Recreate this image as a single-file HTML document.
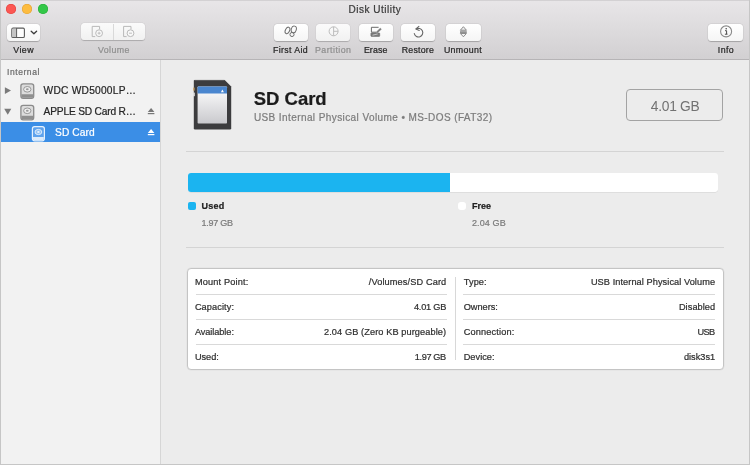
<!DOCTYPE html>
<html><head><meta charset="utf-8"><title>Disk Utility</title>
<style>
html,body{margin:0;padding:0;}
body{width:750px;height:465px;overflow:hidden;position:relative;background:#ececec;font-family:"Liberation Sans",sans-serif;}
.t{position:absolute;white-space:nowrap;line-height:1;-webkit-text-stroke:0.22px currentColor;}
.abs{position:absolute;}
#toolbar{position:absolute;left:0;top:0;width:750px;height:59px;background:linear-gradient(#e8e6e8,#d2d0d2);border-bottom:1px solid #b6b4b6;box-shadow:inset 0 1px 0 #d3d1d3;box-sizing:content-box;}
#sidebar{position:absolute;left:0;top:60px;width:160px;height:405px;background:#f2f2f2;border-right:1px solid #d6d6d6;}
.btn{position:absolute;top:23.8px;height:17.2px;border-radius:3.5px;background:linear-gradient(#ffffff,#f5f5f5);box-shadow:0 0.5px 0.9px rgba(0,0,0,0.22),0 0 0 0.5px rgba(0,0,0,0.06);}
.hl{position:absolute;height:1px;background:#d4d4d4;}
#app{position:absolute;left:0;top:0;width:750px;height:465px;overflow:hidden;will-change:transform;}
#frame{position:absolute;left:0;top:0;width:748px;height:463px;border:1px solid #c6c6c6;border-top:none;height:464px;pointer-events:none;}
svg{position:absolute;overflow:visible;}
</style></head><body><div id="app">
<div id="toolbar"></div>
<div id="sidebar"></div>

<div class="abs" style="left:5.7px;top:4px;width:10px;height:10px;border-radius:50%;background:#fc5753;box-shadow:inset 0 0 0 0.5px #df3e3a;"></div>
<div class="abs" style="left:21.7px;top:4px;width:10px;height:10px;border-radius:50%;background:#fdbc40;box-shadow:inset 0 0 0 0.5px #de9f34;"></div>
<div class="abs" style="left:37.9px;top:4px;width:10px;height:10px;border-radius:50%;background:#33c748;box-shadow:inset 0 0 0 0.5px #27aa35;"></div>
<div class="btn" style="left:7px;width:33px;"></div>
<div class="btn" style="left:80.5px;top:23px;width:64.7px;opacity:0.88;"></div>
<div class="abs" style="left:112.7px;top:23.5px;width:1px;height:16.5px;background:#d9d9d9;"></div>
<div class="btn" style="left:273.6px;width:34px;opacity:1;"></div>
<div class="btn" style="left:316.3px;width:34px;opacity:0.88;"></div>
<div class="btn" style="left:358.8px;width:34px;opacity:1;"></div>
<div class="btn" style="left:401.2px;width:34px;opacity:1;"></div>
<div class="btn" style="left:446px;width:35px;opacity:1;"></div>
<div class="btn" style="left:708.4px;width:35px;opacity:1;"></div>
<span class="t" style="left:348.60px;top:5.00px;font-size:10px;color:#3a3a3a;letter-spacing:0.503px;">Disk Utility</span>
<span class="t" style="left:13.30px;top:46.00px;font-size:8.8px;color:#262626;letter-spacing:0.454px;">View</span>
<span class="t" style="left:98.00px;top:46.00px;font-size:8.8px;color:#8f8f8f;letter-spacing:0.390px;">Volume</span>
<span class="t" style="left:273.00px;top:46.00px;font-size:8.8px;color:#262626;letter-spacing:0.364px;">First Aid</span>
<span class="t" style="left:315.00px;top:46.00px;font-size:8.8px;color:#8f8f8f;letter-spacing:0.465px;">Partition</span>
<span class="t" style="left:363.90px;top:46.00px;font-size:8.8px;color:#262626;letter-spacing:0.104px;">Erase</span>
<span class="t" style="left:401.80px;top:46.00px;font-size:8.8px;color:#262626;letter-spacing:0.199px;">Restore</span>
<span class="t" style="left:443.90px;top:46.00px;font-size:8.8px;color:#262626;letter-spacing:0.365px;">Unmount</span>
<span class="t" style="left:717.80px;top:46.00px;font-size:8.8px;color:#262626;letter-spacing:0.407px;">Info</span>
<div class="abs" style="left:1px;top:122.4px;width:159px;height:19.5px;background:#3b8ee6;"></div>
<span class="t" style="left:7.00px;top:68.00px;font-size:8.5px;color:#6c6c6c;letter-spacing:0.565px;">Internal</span>
<span class="t" style="left:43.60px;top:86.00px;font-size:10.2px;color:#262626;letter-spacing:0.237px;">WDC WD5000LP…</span>
<span class="t" style="left:43.60px;top:107.00px;font-size:10.2px;color:#262626;letter-spacing:-0.188px;">APPLE SD Card R…</span>
<span class="t" style="left:55.00px;top:128.00px;font-size:10.2px;color:#ffffff;letter-spacing:0.114px;">SD Card</span>
<span class="t" style="left:253.80px;top:90.00px;font-size:18.5px;color:#1c1c1c;letter-spacing:-0.030px;font-weight:bold;">SD Card</span>
<span class="t" style="left:253.90px;top:113.00px;font-size:10px;color:#7c7c7c;letter-spacing:0.410px;">USB Internal Physical Volume • MS-DOS (FAT32)</span>
<div class="abs" style="left:626.3px;top:89px;width:95px;height:30px;border:1.3px solid #a3a3a3;border-radius:4px;"></div>
<span class="t" style="left:650.80px;top:100.00px;font-size:13.8px;color:#727272;letter-spacing:-0.272px;-webkit-text-stroke:0;">4.01 GB</span>
<div class="hl" style="left:186px;top:151px;width:538px;"></div>
<div class="hl" style="left:186px;top:247px;width:538px;"></div>
<div class="abs" style="left:188px;top:173px;width:530px;height:19px;border-radius:3px;background:#ffffff;overflow:hidden;box-shadow:0 0.5px 0.5px rgba(0,0,0,0.12);"><div style="width:261.6px;height:19px;background:#1bb4f0;"></div></div>
<div class="abs" style="left:188.4px;top:201.8px;width:7.8px;height:7.8px;border-radius:2px;background:#1bb4f0;"></div>
<div class="abs" style="left:458.4px;top:201.6px;width:8px;height:8px;border-radius:3px;background:#ffffff;"></div>
<span class="t" style="left:201.50px;top:202.00px;font-size:9px;color:#222;letter-spacing:0.232px;font-weight:bold;">Used</span>
<span class="t" style="left:201.50px;top:219.00px;font-size:9px;color:#7a7a7a;letter-spacing:-0.254px;">1.97 GB</span>
<span class="t" style="left:472.00px;top:202.00px;font-size:9px;color:#222;letter-spacing:0.031px;font-weight:bold;">Free</span>
<span class="t" style="left:472.00px;top:219.00px;font-size:9px;color:#7a7a7a;letter-spacing:0.113px;">2.04 GB</span>
<div class="abs" style="left:187px;top:268px;width:535px;height:99.5px;border:1px solid #c4c4c4;border-radius:4px;background:#ffffff;box-shadow:0 0 0 0.5px rgba(0,0,0,0.05);"></div>
<div class="abs" style="left:455px;top:277px;width:1px;height:83px;background:#d8d8d8;"></div>
<div class="hl" style="left:195.5px;top:294px;width:251px;background:#d9d9d9;"></div>
<div class="hl" style="left:463px;top:294px;width:252px;background:#d9d9d9;"></div>
<div class="hl" style="left:195.5px;top:319px;width:251px;background:#d9d9d9;"></div>
<div class="hl" style="left:463px;top:319px;width:252px;background:#d9d9d9;"></div>
<div class="hl" style="left:195.5px;top:344px;width:251px;background:#d9d9d9;"></div>
<div class="hl" style="left:463px;top:344px;width:252px;background:#d9d9d9;"></div>
<span class="t" style="left:194.90px;top:278.00px;font-size:9.2px;color:#303030;letter-spacing:0.168px;">Mount Point:</span>
<span class="t" style="left:368.80px;top:278.00px;font-size:9.2px;color:#303030;letter-spacing:0.121px;">/Volumes/SD Card</span>
<span class="t" style="left:194.90px;top:303.00px;font-size:9.2px;color:#303030;letter-spacing:0.094px;">Capacity:</span>
<span class="t" style="left:414.00px;top:303.00px;font-size:9.2px;color:#303030;letter-spacing:-0.242px;">4.01 GB</span>
<span class="t" style="left:194.90px;top:328.00px;font-size:9.2px;color:#303030;letter-spacing:-0.070px;">Available:</span>
<span class="t" style="left:324.00px;top:328.00px;font-size:9.2px;color:#303030;letter-spacing:0.101px;">2.04 GB (Zero KB purgeable)</span>
<span class="t" style="left:194.90px;top:353.00px;font-size:9.2px;color:#303030;letter-spacing:-0.033px;">Used:</span>
<span class="t" style="left:414.80px;top:353.00px;font-size:9.2px;color:#303030;letter-spacing:-0.376px;">1.97 GB</span>
<span class="t" style="left:463.70px;top:278.00px;font-size:9.2px;color:#303030;letter-spacing:0.124px;">Type:</span>
<span class="t" style="left:590.90px;top:278.00px;font-size:9.2px;color:#303030;letter-spacing:0.077px;">USB Internal Physical Volume</span>
<span class="t" style="left:463.70px;top:303.00px;font-size:9.2px;color:#303030;letter-spacing:-0.009px;">Owners:</span>
<span class="t" style="left:678.90px;top:303.00px;font-size:9.2px;color:#303030;letter-spacing:0.072px;">Disabled</span>
<span class="t" style="left:463.70px;top:328.00px;font-size:9.2px;color:#303030;letter-spacing:0.160px;">Connection:</span>
<span class="t" style="left:697.50px;top:328.00px;font-size:9.2px;color:#303030;letter-spacing:-0.608px;">USB</span>
<span class="t" style="left:463.70px;top:353.00px;font-size:9.2px;color:#303030;letter-spacing:0.038px;">Device:</span>
<span class="t" style="left:683.90px;top:353.00px;font-size:9.2px;color:#303030;letter-spacing:0.017px;">disk3s1</span>
<!-- view icon -->
<svg style="left:0;top:0" width="750" height="60" viewBox="0 0 750 60" fill="none">
  <!-- sidebar toggle -->
  <rect x="11.8" y="28.1" width="12.6" height="9.4" rx="1.3" stroke="#5a5a5a" stroke-width="1.1" fill="#fdfdfd"/>
  <rect x="12.3" y="28.6" width="4" height="8.4" fill="#c4c4c4"/>
  <line x1="16.6" y1="28.1" x2="16.6" y2="37.5" stroke="#5a5a5a" stroke-width="1"/>
  <polyline points="31.2,31.2 33.9,33.8 36.6,31.2" stroke="#3c3c3c" stroke-width="1.3" stroke-linecap="round" stroke-linejoin="round"/>
  <!-- volume add -->
  <g stroke="#b9b9b9" stroke-width="1" fill="none">
    <path d="M95.2 36.6 H92.2 V26.4 H99.6 V29.3"/>
    <circle cx="99.1" cy="33.2" r="3.4" fill="#f9f9f9"/>
    <path d="M97.6 33.2 H100.6 M99.1 31.7 V34.7" stroke-width="0.9"/>
    <path d="M126.6 36.6 H123.6 V26.4 H131 V29.3"/>
    <circle cx="130.5" cy="33.2" r="3.4" fill="#f9f9f9"/>
    <path d="M129 33.2 H132" stroke-width="0.9"/>
  </g>
  <!-- first aid (stethoscope) -->
  <g stroke="#707070" stroke-width="1" fill="none">
    <ellipse cx="287.5" cy="30.4" rx="2.1" ry="3.4" transform="rotate(26 287.5 30.4)"/>
    <ellipse cx="293.8" cy="29.4" rx="2.5" ry="3.4" transform="rotate(16 293.8 29.4)"/>
    <circle cx="292" cy="34.5" r="2.05"/>
  </g>
  <!-- partition -->
  <g stroke="#bdbdbd" stroke-width="1" fill="none">
    <circle cx="333.6" cy="31.3" r="4.5"/>
    <path d="M333.6 26.8 V35.8 M333.6 31.3 H338.1"/>
  </g>
  <!-- erase -->
  <g stroke="#6a6a6a" stroke-width="1" fill="none" stroke-linejoin="round">
    <path d="M378.6 27.3 H371.4 V32.2 H376"/>
    <rect x="370.9" y="33" width="8.8" height="3.4" rx="0.6" fill="#7c7c7c" stroke="#6a6a6a" stroke-width="0.6"/>
    <path d="M372.6 35.2 L377.8 33.9" stroke="#d8d8d8" stroke-width="0.8"/>
    <path d="M376.2 32.2 L380.3 28.2 L381.3 29.3 L377.4 32.8 Z" fill="#777" stroke-width="0.5"/>
  </g>
  <!-- restore -->
  <g stroke="#666" stroke-width="1.1" fill="none" stroke-linecap="round" stroke-linejoin="round">
    <path d="M416.2 29.0 A4.3 4.3 0 1 1 414.3 33.6"/>
    <path d="M418.9 26.4 L415.9 29.0 L419.3 30.4"/>
  </g>
  <!-- unmount -->
  <g stroke="#7a7a7a" stroke-width="0.85" fill="#f2f2f2" stroke-linejoin="round">
    <path d="M463.4 26.7 L466.4 30.2 H460.4 Z"/>
    <path d="M463.4 36.8 L466.4 33.5 H460.4 Z"/>
    <path d="M460 31.3 H466.8 M460 32.5 H466.8" stroke-width="0.75" stroke="#6e6e6e"/>
  </g>
  <!-- info -->
  <circle cx="726.1" cy="31.4" r="5.5" stroke="#8a8a8a" stroke-width="1.1"/>
  <circle cx="726.2" cy="28.8" r="0.8" fill="#4a4a4a"/>
  <path d="M725 30.7 H726.6 V34.1 M724.9 34.2 H727.5" stroke="#4a4a4a" stroke-width="1"/>
</svg>
<!-- sidebar icons -->
<svg style="left:0;top:60px" width="161" height="100" viewBox="0 60 161 100" fill="none">
  <defs>
    <linearGradient id="hd" x1="0" y1="0" x2="0" y2="1"><stop offset="0" stop-color="#e4e4e4"/><stop offset="1" stop-color="#c4c4c4"/></linearGradient>
  </defs>
  <path d="M4.9 87.2 L11 90.6 L4.9 94 Z" fill="#7a7a7a"/>
  <path d="M4.2 108.7 L11.3 108.7 L7.75 114.7 Z" fill="#7a7a7a"/>
  <g id="hdd">
    <rect x="20.9" y="83.9" width="12.8" height="14.4" rx="2.2" fill="#dcdcdc" stroke="#8b8b8b" stroke-width="1.3"/>
    <path d="M21.4 94.3 H33.2 V96.4 Q33.2 97.8 31.8 97.8 H22.8 Q21.4 97.8 21.4 96.4 Z" fill="#8f8f8f"/>
    <ellipse cx="27.3" cy="89.3" rx="3.7" ry="2.8" fill="#ededed" stroke="#8f8f8f" stroke-width="0.9"/>
    <ellipse cx="27.3" cy="89.3" rx="1.4" ry="1" fill="#9a9a9a"/>
  </g>
  <use href="#hdd" y="21.5"/>
  <!-- sd volume icon (white on blue) -->
  <g stroke="#e6f1fd" fill="none">
    <rect x="32.4" y="126.6" width="12" height="14.2" rx="2.2" stroke-width="1.2" fill="#5ea2ec"/>
    <path d="M33 137 H43.8 V139 Q43.8 140.2 42.6 140.2 H34.2 Q33 140.2 33 139 Z" fill="#dcebfb" stroke="none"/>
    <ellipse cx="38.4" cy="132" rx="3.4" ry="2.6" stroke-width="0.9" fill="#8fc0f3"/>
    <ellipse cx="38.4" cy="132" rx="1.3" ry="0.9" fill="#e6f1fd" stroke="none"/>
  </g>
  <!-- eject -->
  <g fill="#777">
    <path d="M151.1 108 L154.4 112 H147.8 Z"/><rect x="147.8" y="113" width="6.6" height="1.2"/>
  </g>
  <g fill="#ffffff">
    <path d="M151.1 129 L154.4 133 H147.8 Z"/><rect x="147.8" y="134" width="6.6" height="1.2"/>
  </g>
</svg>
<!-- SD card big icon -->
<svg style="left:190px;top:76px" width="46" height="58" viewBox="190 76 46 58">
  <defs>
    <linearGradient id="lbl" x1="0" y1="0" x2="0" y2="1"><stop offset="0" stop-color="#fbfbfb"/><stop offset="0.2" stop-color="#f4f4f5"/><stop offset="1" stop-color="#c9c9cd"/></linearGradient>
  </defs>
  <path d="M194.6 79.9 H224.7 L231.2 86.5 V128.2 Q231.2 129.4 230 129.4 H195 Q193.8 129.4 193.8 128.2 V80.7 Q193.8 79.9 194.6 79.9 Z" fill="#3c3c3e"/>
  <path d="M194.6 80.4 H224.5" stroke="#5c5c5e" stroke-width="1"/>
  <rect x="193.2" y="87.6" width="1.4" height="3" fill="#c9a062"/>
  <rect x="193.2" y="92.6" width="1.6" height="3.6" fill="#e4e4e4"/>
  <rect x="197.6" y="86.4" width="29.4" height="37.2" rx="0.8" fill="url(#lbl)"/>
  <path d="M198.4 86.4 H226.2 Q227 86.4 227 87.2 V93.6 H197.6 V87.2 Q197.6 86.4 198.4 86.4 Z" fill="#4a86cf"/>
  <path d="M222.4 89.4 L223.9 92.2 H220.9 Z" fill="#ffffff"/>
</svg>

<div id="frame"></div>
</div></body></html>
